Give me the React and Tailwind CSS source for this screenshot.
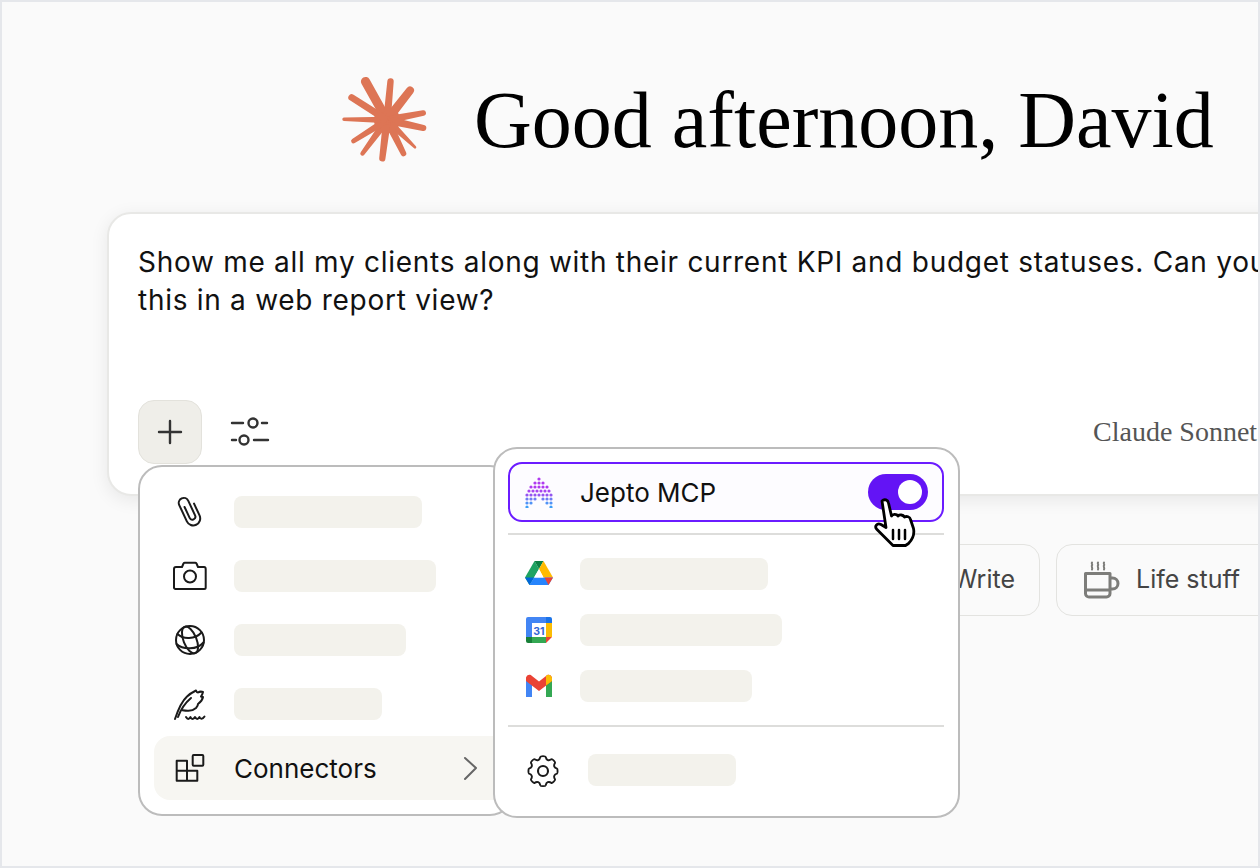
import React from "react";

const sans = { fontFamily: "Inter, sans-serif" };

function Star() {
  const c = [67, 60];
  const rays = [
    [45.5, 21.5, 4.600, 4.500], [70.5, 21.5, 3.200, 3.800], [90, 30.5, 4, 4.500], [103.3, 53, 2.700, 3.800],
    [103.3, 68, 3, 4], [95, 87.3, 1.300, 4], [83.5, 93.5, 2.800, 4], [62.3, 98.5, 3.100, 4],
    [42.5, 93.5, 2.200, 4], [33.5, 81, 2.400, 3.500], [24, 59.3, 1.700, 3.200], [31.7, 37.5, 3.400, 3.500],
  ];
  const shapes = rays.map(([x, y, r, r0]) => {
    const dx = x - c[0], dy = y - c[1];
    const l = Math.hypot(dx, dy);
    const nx = -dy / l, ny = dx / l;
    return `M${c[0] + nx * r0} ${c[1] + ny * r0}L${x + nx * r} ${y + ny * r}A${r} ${r} 0 0 0 ${x - nx * r} ${y - ny * r}L${c[0] - nx * r0} ${c[1] - ny * r0}Z`;
  });
  return (
    <svg width="90" height="90" viewBox="22 15 90 90" className="shrink-0" fill="#dd7555">
      <circle cx="67" cy="60" r="13" />
      {shapes.map((d, i) => <path key={i} d={d} />)}
    </svg>
  );
}

function Stroke({ children, size = 32, className = "", sw = 2, color = "#1a1a1a", box = 32 }) {
  return (
    <svg width={size} height={size} viewBox={`0 0 ${box} ${box}`} fill="none" stroke={color} strokeWidth={sw} strokeLinecap="round" strokeLinejoin="round" className={`shrink-0 overflow-visible ${className}`}>
      {children}
    </svg>
  );
}

const Clip = () => (
  <Stroke>
    <g transform="rotate(-25 16 16) translate(3 0)">
      <path d="M12 10V22a3 3 0 0 0 6 0V6a5 5 0 0 0-10 0V24a7 7 0 0 0 14 0V11" />
    </g>
  </Stroke>
);
const Camera = () => (
  <Stroke>
    <path d="M2 9C2 7.800 2.800 7 4 7H10L11.500 3.500C11.800 3 12.200 2.800 12.800 2.800H23.200C23.800 2.800 24.200 3 24.500 3.500L26 7H32C33 7 33.700 7.800 33.700 9V27.500C33.700 28.300 33 29 32.200 29H3.500C2.700 29 2 28.300 2 27.500Z" />
    <circle cx="18" cy="16.500" r="6" />
  </Stroke>
);
const Globe = () => (
  <Stroke>
    <g transform="translate(2 0)">
      <circle cx="16" cy="16" r="14" />
      <ellipse cx="16" cy="16" rx="6.500" ry="14.200" transform="rotate(-22 16 16)" />
      <path d="M3.500 10C9 15.500 21 15.500 27.500 8.500M2.500 20C9 26 23 26 29.500 18.500" />
    </g>
  </Stroke>
);
const Quill = () => (
  <Stroke>
    <g transform="translate(1 0)">
      <path d="M2 31C5 22 8 14 14 8.500 17 5.500 20 4 23 2.500c.5 1.500 1 2 2 2 1.500-1 3.500-1 5-.5-.5 2-1 3.500-2 4.500 1 .5 1.500.5 2 .5-.5 3-3 5.500-5 7 0 1.500-.5 2.500-2 4-2 1.800-5.500 3-8.500 2.800-1.500 0-3-.2-5-.5" />
      <path d="M5 29C8 21 12 15 18 10" />
      <path d="M13 29c1.500 2.500 3 2.500 4.500 0 1 2.500 3 2.500 4.500 0 1.500 2.500 3 2.500 4.500 0 1 2.500 3 2.500 5-.5" />
    </g>
  </Stroke>
);
const Blocks = () => (
  <Stroke>
    <path d="M4.700 8.700H15V28.700H4.700ZM4.700 18.700H25.300V28.700H4.700Z" />
    <rect x="20.700" y="3" width="10.600" height="10.700" rx="1" />
  </Stroke>
);
const Gear = () => (
  <Stroke sw={2.100}>
    <g transform="translate(0 -1)">
      <path d="M13 3.500c.4-1.300 5.600-1.300 6 0 .3 1.500.8 2.800 2.300 3.400 1.500.6 2.800 0 4-.8 1.100-.6 4.700 3 4 4.100-.8 1.200-1.300 2.500-.7 4 .5 1.400 1.800 1.900 3 2.200.8.300.8 5.300 0 5.700-1.300.3-2.500.8-3 2.200-.6 1.500-.1 2.800.7 4 .6 1.100-3 4.700-4 4-1.200-.8-2.500-1.300-4-.7-1.500.6-2 1.900-2.300 3.300-.4 1.300-5.600 1.300-6 0-.3-1.400-.8-2.700-2.300-3.300-1.500-.6-2.800-.1-4 .7-1 .7-4.600-2.900-4-4 .8-1.200 1.300-2.500.7-4-.5-1.400-1.700-1.900-3-2.200-.8-.4-.8-5.400 0-5.700 1.200-.3 2.500-.8 3-2.200.6-1.500.1-2.800-.7-4-.7-1.100 2.900-4.700 4-4.100 1.200.8 2.500 1.400 4 .8 1.500-.6 2-1.900 2.300-3.400Z" transform="translate(1.600 .800) scale(.9)" />
      <circle cx="16" cy="18" r="5" />
    </g>
  </Stroke>
);

function Jepto() {
  const layout = [
    [16],
    [12, 16, 20],
    [8, 12, 16, 20, 24],
    [6, 10, 14, 18, 22, 26],
    [4, 8, 12, 16, 20, 24, 28],
    [4, 8, 12, 20, 24, 28],
    [4, 8, 24, 28],
    [4, 28],
  ];
  const colors = ["#b03af0", "#b03af0", "#b03af0", "#a844f0", "#9455f0", "#6f7cf3", "#4f92f6", "#3c9ef8"];
  return (
    <svg width="32" height="32" viewBox="0 0 32 32" className="shrink-0">
      {layout.map((r, j) => r.map((x) => (
        <circle key={`${j}-${x}`} cx={x} cy={3 + j * 4} r="1.600" fill={colors[j]} />
      )))}
    </svg>
  );
}

const Drive = () => (
  <svg width="30" height="30" viewBox="0 0 30 30" className="shrink-0">
    <path d="M10.500 2 1 18.500 5.500 26 15 10Z" fill="#1ea362" />
    <path d="M10.500 2h9L15 10Z" fill="#0d8043" />
    <path d="M19.500 2 29 18.500h-9.500L15 10Z" fill="#ffba00" />
    <path d="M10.200 18.500H29L24.500 26h-19Z" fill="#2684fc" />
    <path d="M1 18.500h9.200L5.500 26Z" fill="#0066da" />
    <path d="M20.500 18.500H29L24.500 26Z" fill="#ea4335" />
    <path d="M15 10l4.500 8.500h-9.300Z" fill="#fff" />
  </svg>
);
const Cal = () => (
  <svg width="28" height="28" viewBox="0 0 28 28" className="shrink-0">
    <path d="M3 1h20v6H7v14H1V3a2 2 0 0 1 2-2Z" fill="#4285f4" />
    <path d="M21 1h4a2 2 0 0 1 2 2v4h-6Z" fill="#1a73e8" />
    <rect x="21" y="7" width="6" height="14" fill="#fbbc04" />
    <path d="M1 21h6v6H3a2 2 0 0 1-2-2Z" fill="#188038" />
    <rect x="7" y="21" width="14" height="6" fill="#34a853" />
    <path d="M21 21h6l-6 6Z" fill="#ea4335" />
    <rect x="7" y="7" width="14" height="14" fill="#fff" />
    <text x="14" y="18.500" textAnchor="middle" fontSize="10.500" fontWeight="700" fill="#3367d6" fontFamily="Inter, sans-serif">31</text>
  </svg>
);
const Gmail = () => (
  <svg width="30" height="30" viewBox="0 0 30 30" className="shrink-0">
    <path d="M2 8v18h6V12Z" fill="#4285f4" />
    <path d="M28 8v18h-6V12Z" fill="#34a853" />
    <path d="M2 6.500C3.500 3 6.500 3.500 8 5l7 5.500L22 5c1.500-1.500 4.500-2 6 1.500L28 10 15 20 2 10Z" fill="#ea4335" />
    <path d="M22 5c2-2 5-1.500 6 2v3l-6 4.500Z" fill="#fbbc04" />
  </svg>
);
const Mug = () => (
  <svg width="38" height="38" viewBox="0 0 38 38" fill="none" stroke="#7d7d7a" strokeWidth="3" strokeLinecap="round" strokeLinejoin="round" className="shrink-0">
    <path d="M2.500 12.500h24.500v20a3.500 3.500 0 0 1-3.500 3.500H6a3.500 3.500 0 0 1-3.500-3.500ZM27 17h2.500a5 5 0 0 1 0 11H27M2.500 29H27" />
    <path strokeWidth="2" d="M9 1.500c-1 1 1 2 0 3s1 2 0 4M15 1.500c-1 1 1 2 0 3s1 2 0 4M21 1.500c-1 1 1 2 0 3s1 2 0 4" />
  </svg>
);
const Hand = () => (
  <svg width="46" height="50" viewBox="0 0 46 50" className="absolute left-[871px] top-[496px]">
    <path d="M9 3c2.500-2.500 6-1 6.500 2l3 13c1-2 5-2.500 6.500 0 1.500-1.500 5-1.500 6.500 1 2-1 5.500-.5 6 2.500l3 9c1 5-1 11-5 15l-3 2H20l-4-4-12-12c-3-3 0-7 4-5l5 3Z" fill="#fff" stroke="#000" strokeWidth="2.800" strokeLinejoin="round" />
    <path d="M20 32v9M26 32v9M32 32v9" stroke="#000" strokeWidth="2.500" strokeLinecap="round" />
  </svg>
);

const Bar = ({ w }) => <div className={`h-8 rounded-lg bg-[#f3f2ec] ${w}`} />;

export default function App() {
  return (
    <div className="relative w-[1260px] h-[868px] overflow-hidden border-2 border-[#e5e7eb] bg-[#fafafa] box-border">
      <div className="flex items-center pl-[340px] pt-[73px] gap-[42px]">
        <Star />
        <h1 className="text-[80px] leading-[90px] text-black whitespace-nowrap" style={{ fontFamily: '"Liberation Serif", serif' }}>Good afternoon, David</h1>
      </div>

      <div className="ml-[105px] mt-[47px] w-[1300px] h-[284px] rounded-[24px] border-2 border-[#e8e8e6] bg-white shadow-[0_4px_18px_rgba(0,0,0,0.08)] px-[29px] pt-[29px] flex flex-col" style={sans}>
        <p className="text-[28px] leading-[38px] font-normal tracking-[0.72px] text-[#111] whitespace-nowrap">
          Show me all my clients along with their current KPI and budget statuses. Can you
          <br />
          this in a web report view?
        </p>
        <div className="mt-auto mb-[30px] flex items-center">
          <div className="w-16 h-16 rounded-2xl bg-[#efeee9] border border-[#e3e2dc] flex items-center justify-center">
            <Stroke size={28} box={28} color="#333" sw={2.400}><path d="M14 3v22M3 14h22" /></Stroke>
          </div>
          <div className="ml-[28px]">
            <Stroke size={40} box={40} color="#333" sw={2.400}>
              <path d="M2 11H13M32 11h5M2 28h4M24 28H38" />
              <circle cx="23" cy="11" r="4.500" />
              <circle cx="14" cy="28" r="4.500" />
            </Stroke>
          </div>
          <span className="ml-[823px] text-[28px] text-[#555] whitespace-nowrap" style={{ fontFamily: '"Liberation Serif", serif' }}>Claude Sonnet</span>
        </div>
      </div>

      <div className="mt-[48px] pl-[798px] flex gap-4 text-[25px] text-[#444]" style={sans}>
        <div className="w-[240px] h-[72px] rounded-2xl border border-[#e3e3e0] flex items-center justify-end pr-6 shrink-0">Write</div>
        <div className="w-[260px] h-[72px] rounded-2xl border border-[#e3e3e0] flex items-center gap-[14px] pl-[26px] shrink-0"><Mug /> <span className="whitespace-nowrap ml-px">Life stuff</span></div>
      </div>

      <div className="absolute left-[136px] top-[463px] w-[376px] h-[351px] rounded-[24px] border-2 border-[#bcbcbc] bg-white pl-[14px] pr-0 pt-[13px]" style={sans}>
        {[[<Clip />, "w-[188px]"], [<Camera />, "w-[202px]"], [<Globe />, "w-[172px]"], [<Quill />, "w-[148px]"]].map(([ic, w], i) => (
          <div key={i} className="h-16 flex items-center gap-[30px] pl-[18px]">{ic}<Bar w={w} /></div>
        ))}
        <div className="h-16 w-[344px] rounded-l-2xl bg-[#f7f6f2] flex items-center gap-[30px] pl-[18px] text-[26px] text-[#111]">
          <Blocks />
          <span>Connectors</span>
          <svg width="18" height="26" viewBox="0 0 18 26" fill="none" stroke="#666" strokeWidth="2" strokeLinecap="round" strokeLinejoin="round" className="ml-[54px]"><path d="M4 3l11 10L4 24" /></svg>
        </div>
      </div>

      <div className="absolute left-[491px] top-[445px] w-[467px] h-[371px] rounded-[24px] border-2 border-[#bcbcbc] bg-white pl-[13px] pr-[14px] pt-[13px]" style={sans}>
        <div className="h-[60px] rounded-[14px] border-2 border-[#6b1cff] bg-[#fdfcff] flex items-center pl-[13px] pr-[14px] text-[26px] text-[#111]">
          <Jepto />
          <span className="ml-[25px]">Jepto MCP</span>
          <div className="ml-auto w-[60px] h-9 rounded-full bg-[#6314f5] flex items-center justify-end pr-[6px]">
            <div className="w-6 h-6 rounded-full bg-white" />
          </div>
        </div>
        <div className="mt-[11px] h-[2px] bg-[#dddddb]" />
        <div className="mt-[23px] flex flex-col gap-6">
          {[[<Drive />, "w-[188px]"], [<Cal />, "w-[202px]"], [<Gmail />, "w-[172px]"]].map(([ic, w], i) => (
            <div key={i} className="flex items-center h-8 pl-[16px]"><div className="w-[30px] flex justify-center">{ic}</div><div className="ml-[26px]"><Bar w={w} /></div></div>
          ))}
        </div>
        <div className="mt-[23px] h-[2px] bg-[#dddddb]" />
        <div className="mt-[27px] flex items-center pl-[19px] gap-[29px]">
          <Gear /><Bar w="w-[148px]" />
        </div>
      </div>

      <Hand />
    </div>
  );
}
